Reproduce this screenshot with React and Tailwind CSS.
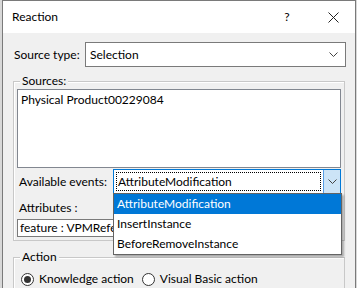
import React from 'react';

const FONT = { fontFamily: '"Segoe UI", Lato, "Liberation Sans", sans-serif' };

function Chevron() {
  return (
    <svg width="9" height="6" viewBox="0 0 9 6">
      <path d="M0.5 0.5 L4.5 4.5 L8.5 0.5" fill="none" stroke="#444" strokeWidth="1" />
    </svg>
  );
}

function Radio({ checked }) {
  return (
    <span className="w-[13px] h-[13px] rounded-full border border-[#333] bg-white flex items-center justify-center">
      {checked && <span className="w-[7px] h-[7px] rounded-full bg-[#333]" />}
    </span>
  );
}

export default function App() {
  const events = ['AttributeModification', 'InsertInstance', 'BeforeRemoveInstance'];

  return (
    <div className="w-[357px] h-[288px] overflow-hidden bg-[#d8d8d8] pl-[2px] text-[12px] text-black" style={FONT}>
      <div className="relative w-[354px] h-[289px] border-t border-l border-r border-[#7a7a7a] bg-[#f0f0f0]">
        {/* Title bar */}
        <div className="h-[32px] bg-white flex items-center pl-[9px]">
          <span className="flex-1">Reaction</span>
          <span className="w-[12px] text-center mr-[35px]">?</span>
          <svg width="11" height="11" viewBox="0 0 11 11" className="mr-[16px]">
            <path d="M0.5 0.5 L10.5 10.5 M10.5 0.5 L0.5 10.5" stroke="#222" strokeWidth="1" />
          </svg>
        </div>

        {/* Source type */}
        <div className="flex items-center mt-[9px] pl-[11px]">
          <span className="w-[71px]">Source type:</span>
          <div className="w-[261px] h-[25px] bg-white border border-[#7a7a7a] flex items-center pl-[4px] pr-[7px]">
            <span className="flex-1">Selection</span>
            <Chevron />
          </div>
        </div>

        {/* Sources group */}
        <div className="relative ml-[10px] mt-[14px] w-[332px] h-[160px] border border-[#c8c8c8] shadow-[inset_1px_1px_0_#fff]">
          <span className="absolute left-[6px] top-[-9px] bg-[#f0f0f0] px-[2px] leading-[16px]">Sources:</span>
          <div className="mt-[7px] ml-[3px] w-[324px] h-[79px] bg-white border border-[#828790] pl-[3px] pt-[2px] leading-[16px]">
            Physical Product00229084
          </div>
          <div className="flex items-center ml-[5px] mt-[1px]">
            <span className="w-[94px]">Available events:</span>
            <div className="w-[228px] h-[25px] bg-white border border-[#0078d7] flex">
              <div className="flex-1 m-[2px] border border-dotted border-black flex items-center pl-[1px]">
                AttributeModification
              </div>
              <div className="w-[17px] bg-[#cce4f7] border-l border-[#569de5] flex items-center justify-center">
                <Chevron />
              </div>
            </div>
          </div>
          <div className="ml-[5px] mt-[6px] leading-[16px]">Attributes :</div>
          <div className="ml-[3px] mt-[3px] w-[200px] h-[18px] bg-white border border-[#7a7a7a] pl-[2px] flex items-center overflow-hidden whitespace-nowrap">
            feature : VPMReference
          </div>
        </div>

        {/* Action group */}
        <div className="relative ml-[10px] mt-[16px] w-[332px] h-[60px] border border-[#c8c8c8] shadow-[inset_1px_1px_0_#fff]">
          <span className="absolute left-[6px] top-[-9px] bg-[#f0f0f0] px-[2px] leading-[16px]">Action</span>
          <div className="flex items-center mt-[13px] ml-[7px] gap-[5px] leading-[16px]">
            <Radio checked />
            <span className="mr-[3px]">Knowledge action</span>
            <Radio />
            <span>Visual Basic action</span>
          </div>
        </div>

        {/* Open dropdown list */}
        <div className="absolute left-[110px] top-[192px] w-[229px] h-[62px] bg-white border border-[#646464] shadow-[2px_2px_2px_rgba(0,0,0,0.3)]">
          {events.map((ev, i) => (
            <div
              key={ev}
              className={`h-[20px] flex items-center pl-[3px] ${i === 0 ? 'bg-[#0078d7] text-white' : ''}`}
            >
              {ev}
            </div>
          ))}
        </div>
      </div>
    </div>
  );
}
